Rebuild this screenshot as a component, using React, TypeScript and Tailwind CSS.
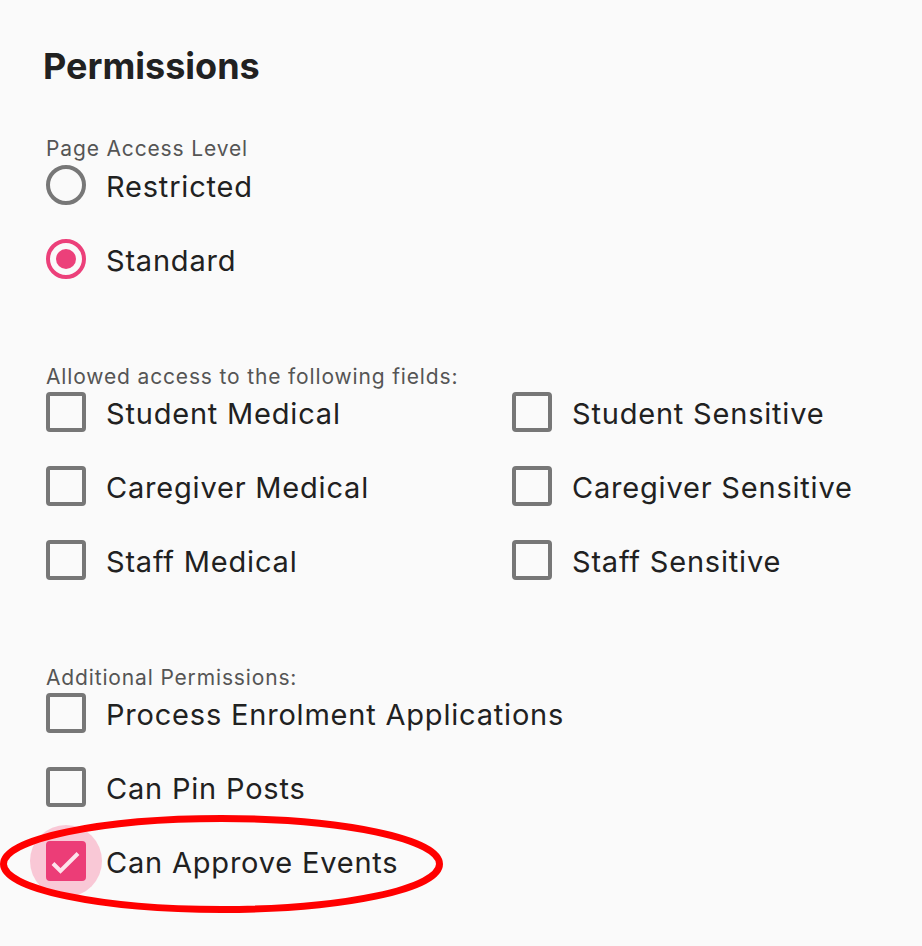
import { useState } from 'react'

type Item = { id: string; label: string }

const fieldItems: Item[][] = [
  [
    { id: 'studentMedical', label: 'Student Medical' },
    { id: 'studentSensitive', label: 'Student Sensitive' },
  ],
  [
    { id: 'caregiverMedical', label: 'Caregiver Medical' },
    { id: 'caregiverSensitive', label: 'Caregiver Sensitive' },
  ],
  [
    { id: 'staffMedical', label: 'Staff Medical' },
    { id: 'staffSensitive', label: 'Staff Sensitive' },
  ],
]

const additionalItems: Item[] = [
  { id: 'processEnrolment', label: 'Process Enrolment Applications' },
  { id: 'pinPosts', label: 'Can Pin Posts' },
  { id: 'approveEvents', label: 'Can Approve Events' },
]

function Radio({ label, checked, onSelect }: { label: string; checked: boolean; onSelect: () => void }) {
  return (
    <button onClick={onSelect} className="flex h-10 items-center gap-5 text-left">
      <span
        className={`flex h-10 w-10 items-center justify-center rounded-full border-4 ${
          checked ? 'border-[#ec407a]' : 'border-[#777777]'
        }`}
      >
        {checked && <span className="h-5 w-5 rounded-full bg-[#ec407a]" />}
      </span>
      <span className="pt-[3px] text-[29px] leading-10 tracking-[0.8px] text-[#212121]">{label}</span>
    </button>
  )
}

function Checkbox({ label, checked, onToggle }: { label: string; checked: boolean; onToggle: () => void }) {
  return (
    <button onClick={onToggle} className="flex h-10 items-center gap-5 text-left">
      <span className="relative flex h-10 w-10 items-center justify-center">
        {checked && <span className="absolute -inset-4 rounded-full bg-[#f9c8d6]" />}
        {checked ? (
          <span className="relative h-10 w-10 rounded-[4px] bg-[#ec3d77]">
            <svg viewBox="0 0 40 40" className="h-10 w-10" fill="none" stroke="#fde4ec" strokeWidth="4">
              <path d="M7 22.5l7.5 7.5L32 12.5" />
            </svg>
          </span>
        ) : (
          <span className="h-10 w-10 rounded-[4px] border-4 border-[#777777]" />
        )}
      </span>
      <span className="whitespace-nowrap pt-[3px] text-[29px] leading-10 tracking-[0.8px] text-[#212121]">
        {label}
      </span>
    </button>
  )
}

export default function App() {
  const [level, setLevel] = useState<'restricted' | 'standard'>('standard')
  const [checked, setChecked] = useState<Record<string, boolean>>({ approveEvents: true })

  const toggle = (id: string) => setChecked((c) => ({ ...c, [id]: !c[id] }))

  return (
    <div
      className="relative h-[946px] w-[922px] overflow-hidden bg-[#fafafa]"
      style={{ fontFamily: 'Inter, "Noto Sans", sans-serif' }}
    >
      <h1 className="ml-[43px] mt-[44px] text-[36px] font-bold leading-[44px] text-[#212121]">Permissions</h1>

      <div className="ml-[46px] flex flex-col">
        <p className="mt-[49px] text-[21px] leading-6 tracking-[0.85px] text-[#555555]">Page Access Level</p>
        <div className="mt-[4px] flex flex-col gap-[34px]">
          <Radio label="Restricted" checked={level === 'restricted'} onSelect={() => setLevel('restricted')} />
          <Radio label="Standard" checked={level === 'standard'} onSelect={() => setLevel('standard')} />
        </div>

        <p className="mt-[86px] text-[21px] leading-6 tracking-[0.85px] text-[#555555]">
          Allowed access to the following fields:
        </p>
        <div className="mt-[3px] flex flex-col gap-[34px]">
          {fieldItems.map((row) => (
            <div key={row[0].id} className="grid grid-cols-[466px_1fr]">
              {row.map((item) => (
                <Checkbox key={item.id} label={item.label} checked={!!checked[item.id]} onToggle={() => toggle(item.id)} />
              ))}
            </div>
          ))}
        </div>

        <p className="mt-[86px] text-[21px] leading-6 tracking-[0.85px] text-[#555555]">Additional Permissions:</p>
        <div className="mt-[3px] flex flex-col gap-[34px]">
          {additionalItems.map((item) => (
            <Checkbox key={item.id} label={item.label} checked={!!checked[item.id]} onToggle={() => toggle(item.id)} />
          ))}
        </div>
      </div>

      {/* annotation ring */}
      <svg className="pointer-events-none absolute left-0 top-0" width="922" height="946">
        <ellipse cx="221.5" cy="864" rx="218" ry="45.5" fill="none" stroke="#ff0000" strokeWidth="7" />
      </svg>
    </div>
  )
}
